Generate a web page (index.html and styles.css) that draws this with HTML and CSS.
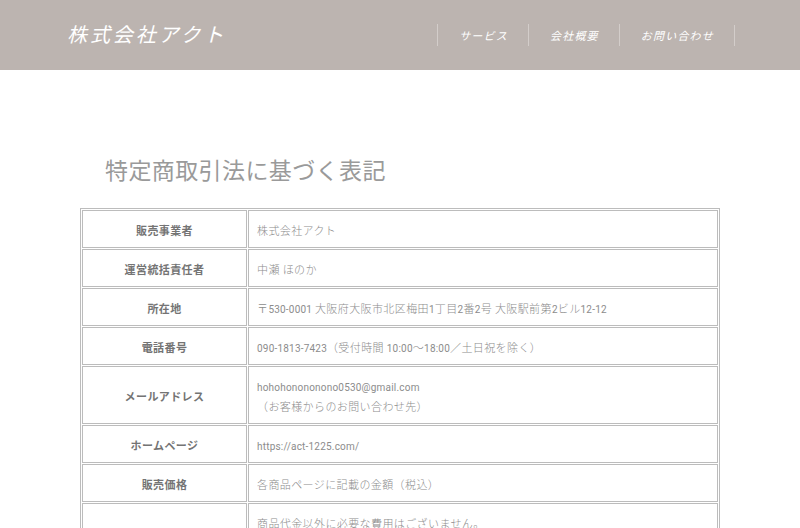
FILE: index.html
```html
<!DOCTYPE html>
<html lang="ja">
<head>
<meta charset="utf-8">
<title>特定商取引法に基づく表記</title>
<link rel="stylesheet" href="styles.css">
</head>
<body>
<header class="site-header">
  <div class="logo">株式会社アクト</div>
  <nav class="nav">
    <a class="nav-item" href="#">サービス</a>
    <a class="nav-item" href="#">会社概要</a>
    <a class="nav-item" href="#">お問い合わせ</a>
  </nav>
</header>
<main class="main">
  <h1 class="title">特定商取引法に基づく表記</h1>
  <table class="law-table">
    <tr><th>販売事業者</th><td>株式会社アクト</td></tr>
    <tr><th>運営統括責任者</th><td>中瀬 ほのか</td></tr>
    <tr><th>所在地</th><td>〒<span class="en">530-0001</span> 大阪府大阪市北区梅田<span class="en">1</span>丁目<span class="en">2</span>番<span class="en">2</span>号 大阪駅前第<span class="en">2</span>ビル<span class="en">12-12</span></td></tr>
    <tr><th>電話番号</th><td><span class="en">090-1813-7423</span>（受付時間 <span class="en">10:00</span>〜<span class="en">18:00</span>／土日祝を除く）</td></tr>
    <tr><th>メールアドレス</th><td><span class="en">hohohonononono0530@gmail.com</span><br>（お客様からのお問い合わせ先）</td></tr>
    <tr><th>ホームページ</th><td><span class="en">https://act-1225.com/</span></td></tr>
    <tr><th>販売価格</th><td>各商品ページに記載の金額（税込）</td></tr>
    <tr><th>商品代金以外の必要料金</th><td>商品代金以外に必要な費用はございません。<br>送料は当社負担とさせていただきます。<br>銀行振込の場合、振込手数料はお客様のご負担となります。</td></tr>
    <tr><th>お支払い方法</th><td>クレジットカード決済、銀行振込</td></tr>
  </table>
</main>
</body>
</html>
```
FILE: styles.css
```css
html, body {
  margin: 0;
  padding: 0;
  background: #ffffff;
  font-family: "Noto Sans CJK JP", "Noto Sans", sans-serif;
}

.site-header {
  height: 70px;
  background: #bcb4b0;
  display: flex;
  align-items: center;
  justify-content: space-between;
  padding: 0 65px 0 67px;
}

.logo {
  color: #ffffff;
  font-size: 20px;
  font-style: italic;
  font-weight: 400;
  letter-spacing: 2.9px;
  line-height: 1;
  margin-top: -3px;
}

.nav {
  display: flex;
  align-items: center;
  border-right: 1px solid #d3cdca;
}

.nav-item {
  display: block;
  color: #ffffff;
  text-decoration: none;
  font-size: 11px;
  font-style: italic;
  letter-spacing: 1.2px;
  line-height: 22px;
  padding: 0 20px 0 21px;
  border-left: 1px solid #d3cdca;
  margin-top: -1px;
}

.main {
  width: 640px;
  margin: 0 auto;
  padding-top: 82px;
}

.title {
  margin: 0 0 22px 25px;
  font-size: 23px;
  font-weight: 400;
  color: #9a9a9a;
  letter-spacing: 0.4px;
  line-height: 34px;
}

.law-table {
  width: 640px;
  border: 1px solid #bcbcbc;
  border-spacing: 1px;
  font-size: 11px;
  letter-spacing: 0.4px;
}

.law-table th,
.law-table td {
  border: 1px solid #bcbcbc;
  padding: 9px 8px 7px;
  line-height: 20px;
}

.law-table th {
  width: 147px;
  color: #747474;
  font-weight: 700;
  text-align: center;
}

.law-table td {
  color: #8c8c8c;
  font-weight: 300;
  text-align: left;
}

.en {
  font-family: Roboto, "Noto Sans", sans-serif;
  font-size: 10px;
  font-weight: 400;
  letter-spacing: 0.2px;
  line-height: 1;
}
```
